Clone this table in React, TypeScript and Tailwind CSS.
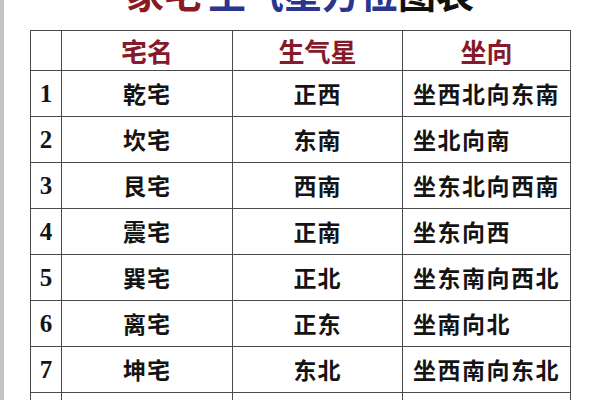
import React from 'react';

const rows = [
    { no: '1', house: '乾宅', star: '正西', facing: '坐西北向东南' },
    { no: '2', house: '坎宅', star: '东南', facing: '坐北向南' },
    { no: '3', house: '艮宅', star: '西南', facing: '坐东北向西南' },
    { no: '4', house: '震宅', star: '正南', facing: '坐东向西' },
    { no: '5', house: '巽宅', star: '正北', facing: '坐东南向西北' },
    { no: '6', house: '离宅', star: '正东', facing: '坐南向北' },
    { no: '7', house: '坤宅', star: '东北', facing: '坐西南向东北' },
    { no: '8', house: '兑宅', star: '西北', facing: '坐西向东' },
];

const cjk = { fontFamily: '"Noto Sans CJK SC", "Noto Sans", sans-serif' };

const App: React.FC = () => {
    return (
        <div className="w-[600px] h-[400px] overflow-hidden bg-white border-l-4 border-[#c4c4c4]" style={cjk}>
            {/* title is mostly cropped off the top in the source picture */}
            <div className="-ml-1 mt-[-27px] h-[38px] text-center text-[38px] leading-none font-bold">
                <span className="text-[#8a1a22] mr-[6px]">家宅</span>
                <span className="text-[#2b3590]">生气星方位</span>
                <span className="text-[#111]">图表</span>
            </div>
            <div className="-ml-1 mt-[19px] px-[30px]">
                <table className="w-[540px] table-fixed border-collapse">
                    <colgroup>
                        <col className="w-[31px]" />
                        <col className="w-[171px]" />
                        <col className="w-[170px]" />
                        <col className="w-[168px]" />
                    </colgroup>
                    <thead>
                        <tr className="h-[38px] text-[26px] font-bold text-[#861a2a]">
                            <th className="border border-[#4a4a4a]"></th>
                            <th className="border border-[#4a4a4a] text-center">宅名</th>
                            <th className="border border-[#4a4a4a] text-center">生气星</th>
                            <th className="border border-[#4a4a4a] text-center">坐向</th>
                        </tr>
                    </thead>
                    <tbody>
                        {rows.map((r) => (
                            <tr key={r.no} className="h-[46px] text-[23px] font-bold text-[#141414]">
                                <td
                                    className="border border-[#4a4a4a] text-center text-[25px]"
                                    style={{ fontFamily: '"Liberation Serif", serif' }}
                                >
                                    {r.no}
                                </td>
                                <td className="border border-[#4a4a4a] text-center tracking-[1px]">{r.house}</td>
                                <td className="border border-[#4a4a4a] text-center tracking-[1px]">{r.star}</td>
                                <td className="border border-[#4a4a4a] text-left pl-[10px] tracking-[1.5px]">{r.facing}</td>
                            </tr>
                        ))}
                    </tbody>
                </table>
            </div>
        </div>
    );
};

export default App;
